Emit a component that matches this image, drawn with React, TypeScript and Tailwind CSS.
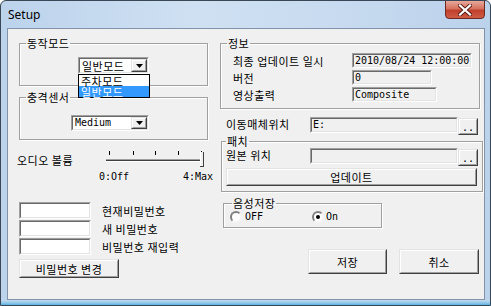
import React from "react";

const KR = "font-['Noto_Sans_CJK_KR',sans-serif] text-[11px] leading-[12px] tracking-[0.5px] whitespace-nowrap";
const MONO = "font-['DejaVu_Sans_Mono',monospace] text-[10px] leading-[12px] whitespace-nowrap";

// classic 3D borders
const Sunken = ({ className = "", bg = "bg-[#f0f0f0]", children }: { className?: string; bg?: string; children?: React.ReactNode }) => (
    <div className={`border border-t-[#a0a0a0] border-l-[#a0a0a0] border-r-white border-b-white ${className}`}>
        <div className={`h-full w-full flex items-center overflow-hidden border border-t-[#696969] border-l-[#696969] border-r-[#e3e3e3] border-b-[#e3e3e3] ${bg}`}>
            {children}
        </div>
    </div>
);

const Raised = ({ className = "", children }: { className?: string; children?: React.ReactNode }) => (
    <div className={`bg-[#f0f0f0] border border-t-[#e3e3e3] border-l-[#e3e3e3] border-r-[#404040] border-b-[#404040] ${className}`}>
        <div className="h-full w-full flex items-center justify-center border border-t-white border-l-white border-r-[#a0a0a0] border-b-[#a0a0a0]">
            {children}
        </div>
    </div>
);

// etched group box
const Group = ({ title, className = "", children }: { title: string; className?: string; children?: React.ReactNode }) => (
    <fieldset className={`border border-[#a0a0a0] shadow-[inset_1px_1px_0_#fff,1px_1px_0_#fff] ${className}`}>
        <legend className={`px-[1px] ${KR}`}>{title}</legend>
        {children}
    </fieldset>
);

const Combo = ({ value, className = "", textClass = KR }: { value: string; className?: string; textClass?: string }) => (
    <Sunken className={className} bg="bg-white">
        <span className={`flex-1 pl-[2px] ${textClass}`}>{value}</span>
        <Raised className="h-full w-[16px]">
            <svg width="7" height="4" viewBox="0 0 7 4">
                <path d="M0 0h7L3.5 4z" fill="#000" />
            </svg>
        </Raised>
    </Sunken>
);

const Radio = ({ checked = false }: { checked?: boolean }) => (
    <div className="w-[12px] h-[12px] rounded-full bg-white border-2 border-t-[#808080] border-l-[#808080] border-r-[#f4f4f4] border-b-[#f4f4f4] flex items-center justify-center">
        {checked && <div className="w-[4px] h-[4px] rounded-full bg-black" />}
    </div>
);

const Trackbar = () => (
    <svg width="100" height="18" viewBox="0 0 100 18">
        {[3, 27, 49, 72, 95].map((x) => (
            <rect key={x} x={x} y={2} width={1} height={4} fill="#000" />
        ))}
        <rect x={0} y={10} width={97} height={1} fill="#a0a0a0" />
        <rect x={0} y={11} width={97} height={1} fill="#404040" />
        <rect x={0} y={12} width={97} height={1} fill="#fff" />
        <rect x={94} y={3} width={1} height={15} fill="#fff" />
        <rect x={95} y={3} width={2} height={14} fill="#f0f0f0" />
        <rect x={97} y={3} width={1} height={15} fill="#404040" />
        <rect x={94} y={17} width={4} height={1} fill="#404040" />
    </svg>
);

const InfoRow = ({ label, value, width }: { label: string; value: string; width: string }) => (
    <div className="flex items-center h-[15px]">
        <span className={`ml-[6px] w-[119px] ${KR}`}>{label}</span>
        <Sunken className={`h-[15px] ${width}`}>
            <span className={`pl-[1px] ${MONO}`}>{value}</span>
        </Sunken>
    </div>
);

const PathRow = ({ label, value, className = "" }: { label: string; value: string; className?: string }) => (
    <div className={`flex items-start h-[18px] ${className}`}>
        <span className={`mt-[1px] w-[84px] ${KR}`}>{label}</span>
        <Sunken className="h-[16px] w-[148px]">
            <span className={`pl-[1px] ${MONO}`}>{value}</span>
        </Sunken>
        <Raised className="mt-[1px] h-[17px] w-[20px]">
            <span className={`${MONO} mt-[3px]`}>..</span>
        </Raised>
    </div>
);

const PasswordRow = ({ label }: { label: string }) => (
    <div className="flex items-center h-[17px]">
        <Sunken className="h-[17px] w-[72px]" bg="bg-white" />
        <span className={`ml-[11px] ${KR}`}>{label}</span>
    </div>
);

export default function App() {
    return (
        <div className="w-[491px] h-[306px] flex flex-col overflow-hidden rounded-t-[6px] border border-[#3a4756] bg-[linear-gradient(90deg,#bcd3ec_0%,#cfe0f2_40%,#c7daef_70%,#bbd2eb_100%)] text-black">
            {/* title bar */}
            <div className="h-[27px] flex items-start">
                <span className="ml-[7px] mt-[6px] font-['Noto_Sans',sans-serif] text-[12px] leading-[16px]">Setup</span>
                <div className="ml-auto mr-[5px] mt-[-1px] w-[40px] h-[19px] rounded-b-[4px] border border-[#6b2a22] bg-[linear-gradient(180deg,#e8a89c_0%,#d6725f_45%,#c0402c_55%,#cf5c44_100%)] flex items-center justify-center">
                    <svg width="14" height="12" viewBox="0 0 14 12">
                        <path d="M2 1.5L12 10.5M12 1.5L2 10.5" stroke="#5a1b14" strokeWidth="4" strokeLinecap="square" />
                        <path d="M2 1.5L12 10.5M12 1.5L2 10.5" stroke="#fff" strokeWidth="2.2" strokeLinecap="square" />
                    </svg>
                </div>
            </div>

            {/* client area */}
            <div className="ml-[6px] w-[478px] h-[272px] border border-[#8193a8] bg-[#f0f0f0] flex pl-[11px]">
                {/* left column */}
                <div className="w-[190px] flex flex-col">
                    <Group title="동작모드" className="mt-[8px] h-[49px] w-[189px] px-[6px]">
                        <div className="relative mt-[8px] ml-[52px] w-[71px]">
                            <Combo value="일반모드" className="h-[17px] w-[71px]" />
                            <div className="absolute left-0 top-[17px] z-10 w-[72px] border border-black bg-white">
                                <div className={`h-[11px] pl-[2px] ${KR} leading-[11px]`}>주차모드</div>
                                <div className={`h-[11px] pl-[2px] ${KR} leading-[11px] bg-[#3399ff] text-white`}>일반모드</div>
                            </div>
                        </div>
                    </Group>

                    <Group title="충격센서" className="mt-[5px] h-[49px] w-[189px] px-[6px]">
                        <Combo value="Medium" className="mt-[12px] ml-[45px] h-[16px] w-[78px]" textClass={MONO} />
                    </Group>

                    <div className="mt-[9px] h-[18px] flex">
                        <span className={`ml-[-2px] mt-[5px] w-[89px] ${KR}`}>오디오 볼륨</span>
                        <Trackbar />
                    </div>
                    <div className={`mt-[4px] ml-[80px] w-[114px] flex justify-between ${MONO}`}>
                        <span>0:Off</span>
                        <span>4:Max</span>
                    </div>

                    <div className="mt-[19px] flex flex-col gap-[1px]">
                        <PasswordRow label="현재비밀번호" />
                        <PasswordRow label="새 비밀번호" />
                        <PasswordRow label="비밀번호 재입력" />
                    </div>
                    <Raised className="mt-[4px] h-[19px] w-[100px]">
                        <span className={KR}>비밀번호 변경</span>
                    </Raised>
                </div>

                {/* right column */}
                <div className="ml-[11px] w-[260px] flex flex-col">
                    <Group title="정보" className="mt-[8px] h-[72px] w-[260px] px-[6px]">
                        <div className="mt-[4px] flex flex-col gap-[2px]">
                            <InfoRow label="최종 업데이트 일시" value="2010/08/24 12:00:00" width="w-[120px]" />
                            <InfoRow label="버전" value="0" width="w-[80px]" />
                            <InfoRow label="영상출력" value="Composite" width="w-[85px]" />
                        </div>
                    </Group>

                    <PathRow label="이동매체위치" value="E:" className="mt-[8px] ml-[6px]" />

                    <Group title="패치" className="ml-[1px] h-[57px] w-[259px] px-[4px]">
                        <PathRow label="원본 위치" value="" className="mt-[1px]" />
                        <Raised className="mt-[2px] h-[18px] w-[251px]">
                            <span className={KR}>업데이트</span>
                        </Raised>
                    </Group>

                    <Group title="음성저장" className="mt-[5px] ml-[3px] h-[31px] w-[159px] px-[8px]">
                        <div className="mt-[2px] h-[12px] flex items-center">
                            <div className="ml-[-2px] w-[82px] flex items-center gap-[3px]">
                                <Radio />
                                <span className={MONO}>OFF</span>
                            </div>
                            <div className="flex items-center gap-[2px]">
                                <Radio checked />
                                <span className={MONO}>On</span>
                            </div>
                        </div>
                    </Group>

                    <div className="mt-[21px] ml-[88px] flex gap-[12px]">
                        <Raised className="h-[25px] w-[79px]">
                            <span className={KR}>저장</span>
                        </Raised>
                        <Raised className="h-[25px] w-[80px]">
                            <span className={KR}>취소</span>
                        </Raised>
                    </div>
                </div>
            </div>

            {/* bottom frame */}
            <div className="flex-1 bg-[linear-gradient(180deg,#c6daef_0%,#8fc7ea_60%,#52b1e2_100%)]" />
        </div>
    );
}
